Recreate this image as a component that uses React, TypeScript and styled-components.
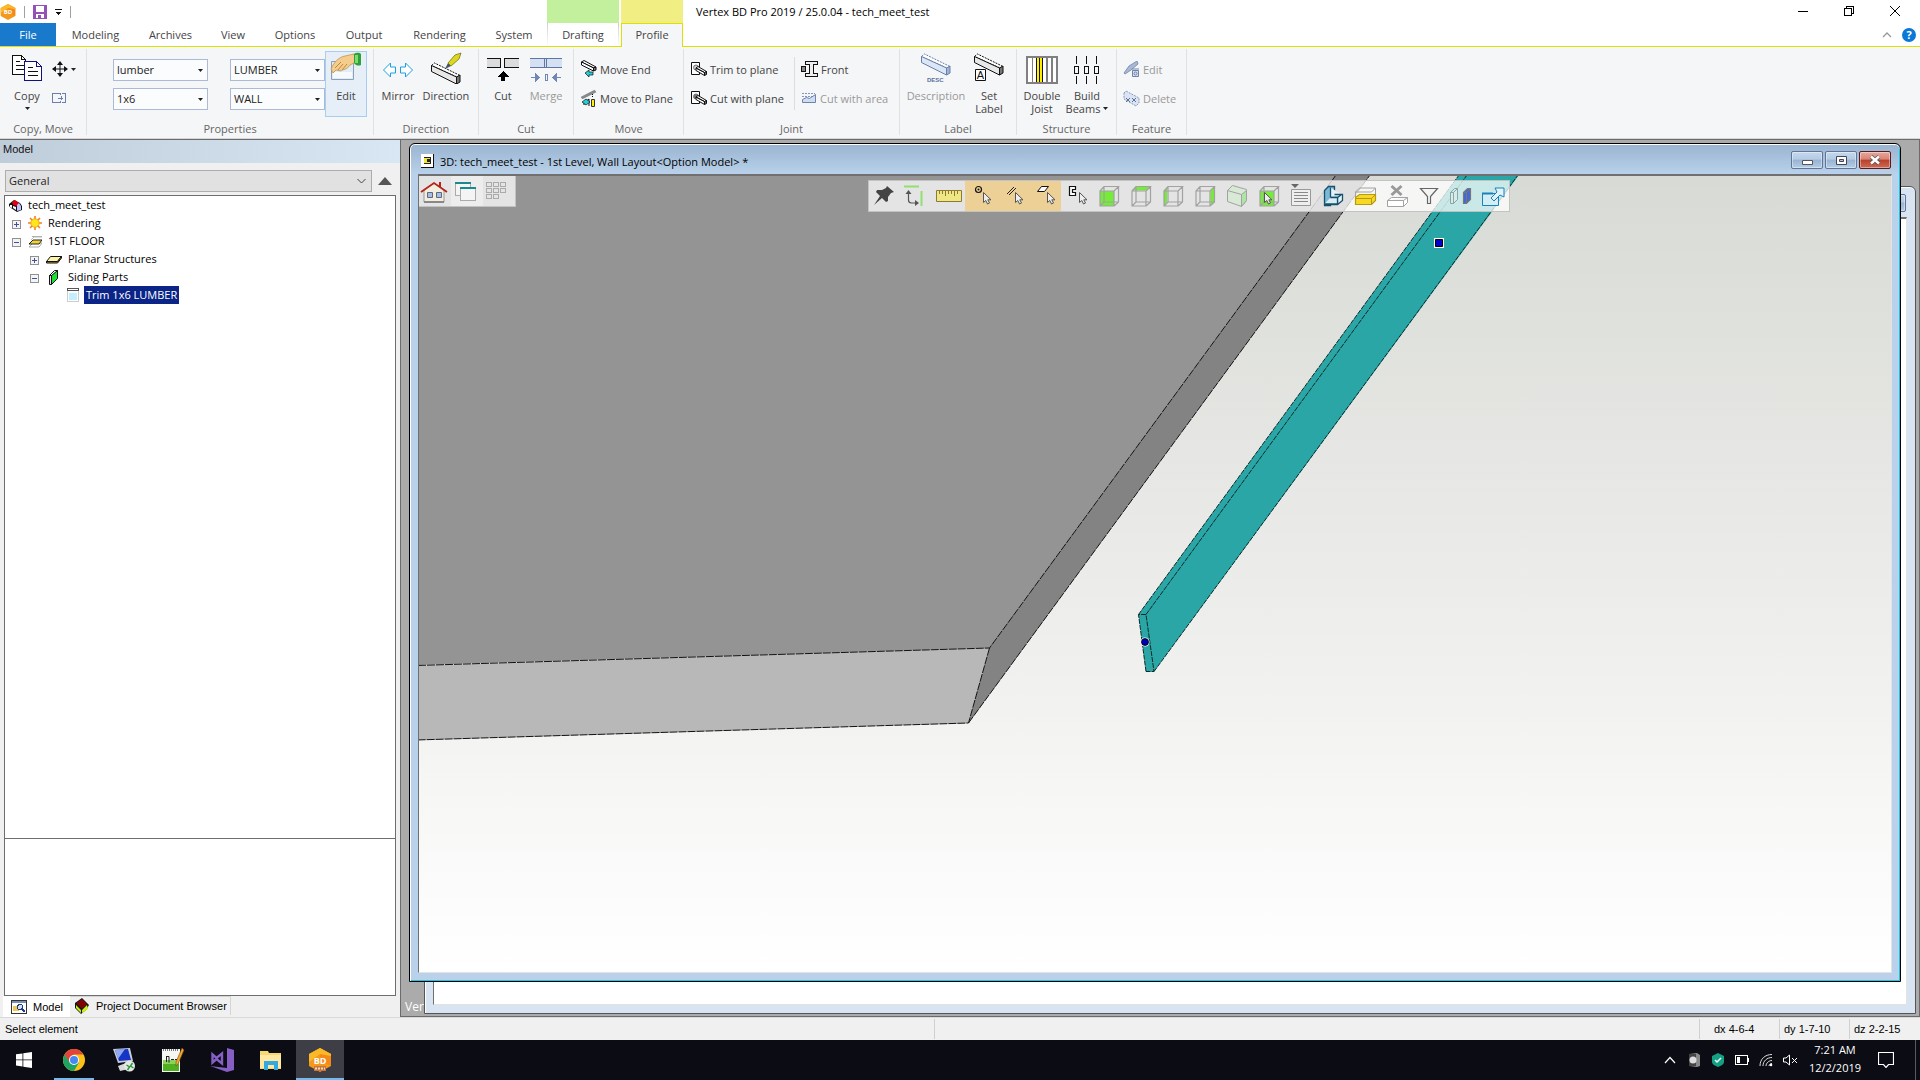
import React from "react";
import styled, { createGlobalStyle, css } from "styled-components";

const ui = `"Segoe UI", "Open Sans", "Noto Sans", sans-serif`;
const classic = `"Liberation Sans", Arial, sans-serif`;

const Global = createGlobalStyle`
  * { box-sizing: border-box; }
  html, body, #root { height: 100%; margin: 0; }
  body { font-family: ${ui}; font-size: 12px; color: #111; overflow: hidden; }
  button, select { font: inherit; color: inherit; margin: 0; padding: 0; border: 0; background: none; border-radius: 0; }
  ul { list-style: none; margin: 0; padding: 0; }
  svg { display: block; flex: none; }
`;

const Page = styled.div`
  height: 100vh;
  display: flex;
  flex-direction: column;
  background: #f0f0f0;
`;

/* ---------- title bar and tabs ---------- */
const TitleBar = styled.header`
  height: 23px;
  flex: none;
  display: flex;
  background: #fff;
`;
const QuickAccess = styled.div`
  width: 547px;
  display: flex;
  align-items: center;
  gap: 8px;
`;
const Bar = styled.i`
  width: 1px;
  height: 12px;
  background: #a0a0a0;
`;
const IconButton = styled.button`
  display: grid;
  place-items: center;
`;
const ContextColor = styled.div<{ $w: number; $c: string }>`
  width: ${(p) => p.$w}px;
  margin-right: 2px;
  background: ${(p) => p.$c};
`;
const AppTitle = styled.h1`
  flex: 1;
  margin: 0 0 0 11px;
  font-size: 11px;
  font-weight: 400;
  line-height: 24px;
  color: #000;
`;
const WindowControls = styled.div`
  display: flex;
  padding-right: 2px;
`;
const ControlButton = styled(IconButton)`
  width: 46px;
  height: 21px;
`;
const TabRow = styled.nav`
  height: 24px;
  flex: none;
  display: flex;
  background: #fff;
  border-bottom: 1px solid #dde000;
`;
const Tab = styled.button<{ $w: number; $kind?: "file" | "context" | "active" }>`
  width: ${(p) => p.$w}px;
  height: 23px;
  padding-bottom: 1px;
  font-size: 11px;
  color: #444;
  ${(p) => p.$kind === "file" && css`background: #1979ca; color: #fff;`}
  ${(p) => p.$kind === "context" && css`
    border: solid; border-width: 0 1px;
    border-image: linear-gradient(#ccc, #fff) 1;
    margin-right: 2px;
  `}
  ${(p) => p.$kind === "active" && css`
    height: 24px; padding-bottom: 3px; background: #f5f6f7;
    border: 1px solid #dde000; border-bottom: 0;
  `}
`;
const TabTools = styled.div`
  margin-left: auto;
  display: flex;
  align-items: center;
  gap: 9px;
  padding-right: 3px;
`;

/* ---------- ribbon ---------- */
const Ribbon = styled.section`
  height: 92px;
  flex: none;
  display: flex;
  padding: 2px 0 0;
  background: #f5f6f7;
  border-bottom: 1px solid #d6d6d6;
`;
const Group = styled.div<{ $w: number }>`
  width: ${(p) => p.$w}px;
  height: 86px;
  display: flex;
  flex-direction: column;
  border-right: 1px solid #e0e1e2;
`;
const GroupBody = styled.div<{ $pad: number }>`
  flex: 1;
  display: flex;
  align-items: flex-start;
  padding-left: ${(p) => p.$pad}px;
`;
const GroupLabel = styled.div`
  height: 14px;
  line-height: 14px;
  margin-bottom: -1px;
  text-align: center;
  font-size: 11px;
  color: #666;
`;
const Big = styled.button<{ $w: number; $on?: boolean }>`
  width: ${(p) => p.$w}px;
  height: 66px;
  margin-top: 2px;
  display: flex;
  flex-direction: column;
  align-items: center;
  gap: 5px;
  border: 1px solid ${(p) => (p.$on ? "#a8cdf0" : "transparent")};
  background: ${(p) => (p.$on ? "#e6eef7" : "none")};
  font-size: 11px;
  line-height: 13px;
  color: #444;
  white-space: nowrap;
  &:disabled { color: #999; }
`;
const Caption = styled.span`
  display: block;
  text-align: center;
`;
const Inline = styled.span`
  display: flex;
  align-items: center;
  gap: 3px;
`;
const Stack = styled.div<{ $gap?: number; $line?: boolean; $w?: number }>`
  margin-top: 8px;
  display: grid;
  gap: 5px;
  width: ${(p) => (p.$w ? p.$w + "px" : "auto")};
  margin-left: ${(p) => p.$gap ?? 0}px;
  ${(p) => p.$line && css`border-right: 1px solid #dcdddf;`}
`;
const Small = styled.button`
  height: 24px;
  display: flex;
  align-items: center;
  gap: 3px;
  font-size: 11px;
  color: #444;
  white-space: nowrap;
  &:disabled { color: #999; }
`;
const Combos = styled.div`
  margin-top: 10px;
  display: grid;
  grid-template-columns: 95px 95px;
  gap: 7px 22px;
`;
const ComboBox = styled.label`
  display: grid;
  grid-template-columns: 1fr 9px;
  align-items: center;
  height: 22px;
  border: 1px solid #abbad6;
  background: #fbfcfd;
`;
const ComboSelect = styled.select`
  grid-area: 1 / 1 / 2 / 3;
  appearance: none;
  height: 20px;
  padding: 0 0 1px 3px;
  font-size: 11px;
  color: #222;
  outline: 0;
`;
const ComboArrow = styled.span`
  grid-area: 1 / 2;
  pointer-events: none;
`;

/* ---------- model panel ---------- */
const Workspace = styled.main`
  flex: 1;
  min-height: 0;
  display: flex;
`;
const Side = styled.aside`
  width: 400px;
  display: flex;
  flex-direction: column;
  border-top: 1px solid #6b6b6b;
  font-size: 11px;
`;
const SideTitle = styled.h2`
  margin: 0;
  height: 23px;
  padding-left: 3px;
  font: 400 11px/19px ${classic};
  background: linear-gradient(90deg, #bfcddb, #d9e6f3);
`;
const FilterRow = styled.div`
  display: flex;
  align-items: center;
  gap: 6px;
  padding: 7px 0 3px 5px;
`;
const Filter = styled.label`
  width: 367px;
  display: grid;
  grid-template-columns: 1fr 14px;
  align-items: center;
  height: 22px;
  border: 1px solid #adadad;
  background: #e1e1e1;
`;
const TreeBox = styled.div`
  flex: 1;
  margin: 0 4px;
  border: 1px solid #6e6e6e;
  background: #fff;
  display: flex;
  flex-direction: column;
`;
const Tree = styled.ul`
  flex: 1;
`;
const Item = styled.li<{ $depth: number }>`
  height: 18px;
  display: flex;
  align-items: center;
  padding-left: ${(p) => p.$depth}px;
`;
const Expand = styled.button<{ $open?: boolean }>`
  width: 9px;
  height: 9px;
  margin: 3px 7px 0 0;
  border: 1px solid #919191;
  background:
    linear-gradient(#4050a0, #4050a0) center / 5px 1px no-repeat,
    ${(p) => (p.$open ? "" : "linear-gradient(#4050a0, #4050a0) center / 1px 5px no-repeat,")}
    #f4f4f4;
`;
const Node = styled.button<{ $sel?: boolean }>`
  height: 18px;
  margin-left: 4px;
  padding: 0 2px 2px;
  color: ${(p) => (p.$sel ? "#fff" : "#000")};
  background-color: ${(p) => (p.$sel ? "#0a2488" : "transparent")};
`;
const Preview = styled.div`
  height: 157px;
  border-top: 1px solid #6e6e6e;
`;
const SideTabs = styled.div`
  display: flex;
  height: 21px;
  padding-left: 3px;
`;
const SideTab = styled.button<{ $on?: boolean }>`
  display: flex;
  align-items: center;
  gap: 6px;
  padding: 0 ${(p) => (p.$on ? 7 : 3)}px 0 ${(p) => (p.$on ? 8 : 4)}px;
  margin-bottom: ${(p) => (p.$on ? 0 : 2)}px;
  font: 11px ${classic};
  color: #000;
  border: 1px solid ${(p) => (p.$on ? "#fff" : "#d5d5d5")};
  border-width: ${(p) => (p.$on ? 0 : "1px 1px 0 0")};
  background: ${(p) => (p.$on ? "#fff" : "#f0f0f0")};
`;

/* ---------- document windows ---------- */
const Mdi = styled.section`
  flex: 1;
  position: relative;
  border: 1px solid #6b6b6b;
  background: #ababab;
  overflow: hidden;
`;
const Minimized = styled.span`
  position: absolute;
  left: 4px;
  bottom: 0;
  font-size: 12px;
  line-height: 18px;
  color: #fff;
`;
const Child = styled.article<{ $back?: boolean }>`
  position: absolute;
  inset: ${(p) => (p.$back ? "46px 3px 2px 23px" : "3px 18px 34px 8px")};
  display: flex;
  flex-direction: column;
  border: 1px solid ${(p) => (p.$back ? "#555" : "#000")};
  border-radius: 6px 6px 0 0;
  padding: 0 8px 8px;
  background: ${(p) => (p.$back ? "#d8e4f2" : "linear-gradient(#99b4d1, #b9d1ea 30px, #b9d1ea)")};
  box-shadow: inset 0 1px #fff, inset 1px 0 #fff${(p) => (p.$back ? "" : ", inset -1px -1px #16c8e4")};
`;
const ChildTitle = styled.header`
  height: 30px;
  display: flex;
  align-items: center;
  gap: 6px;
  padding: 4px 0 0 3px;
`;
const ChildName = styled.h2`
  flex: 1;
  margin: 0;
  font-size: 11px;
  font-weight: 400;
  color: #000;
`;
const ChildButtons = styled.div`
  display: flex;
  gap: 2px;
  margin: 0 1px 2px 0;
`;
const ChildButton = styled(IconButton)<{ $close?: boolean }>`
  width: 32px;
  height: 18px;
  border: 1px solid ${(p) => (p.$close ? "#5a1a1c" : "#5f7496")};
  border-radius: 2px;
  background: ${(p) => p.$close
    ? "linear-gradient(#e8a79c, #d98375 45%, #b8402a 50%, #cc6a55)"
    : "linear-gradient(#c5d8ec, #b4cbe4 45%, #98b3d2 50%, #b4cce6)"};
  box-shadow: inset 0 0 0 1px rgba(255, 255, 255, 0.4);
`;
const Client = styled.div`
  flex: 1;
  min-height: 0;
  position: relative;
  border: solid;
  border-width: 2px 1px 1px 1px;
  border-color: #707070 #e3e3e3 #e3e3e3 #707070;
  background: linear-gradient(#d8dad5, #fff);
  overflow: hidden;
`;
const BlankClient = styled(Client)`
  background: #fff;
`;
const Scene = styled.svg`
  width: 100%;
  height: 100%;
`;
const FloatBar = styled.div<{ $left: number; $top: number }>`
  position: absolute;
  left: ${(p) => p.$left}px;
  top: ${(p) => p.$top}px;
  display: flex;
  border: 1px solid rgba(190, 190, 190, 0.9);
  background: rgba(255, 255, 255, 0.75);
`;
const ToolButton = styled.button<{ $on?: boolean; $light?: boolean }>`
  width: 32px;
  height: 30px;
  background: ${(p) => (p.$on ? "#ecd096" : p.$light ? "rgba(255,255,255,.35)" : "none")};
`;

/* ---------- status bar and taskbar ---------- */
const Status = styled.footer`
  height: 23px;
  flex: none;
  display: flex;
  align-items: center;
  padding: 0 1px 0 5px;
  border-top: 1px solid #d9d9d9;
  background: #f0f0f0;
  font: 11px ${classic};
  color: #000;
`;
const StatusText = styled.span<{ $w?: number }>`
  width: ${(p) => (p.$w ? p.$w + "px" : "auto")};
`;
const Coord = styled.span<{ $w?: number; $pad?: number }>`
  ${(p) => (p.$w ? css`width: ${p.$w}px;` : css`flex: 1;`)}
  height: 20px;
  line-height: 20px;
  padding-left: ${(p) => p.$pad ?? 0}px;
  border-left: 1px solid #d0d0d0;
`;
const Taskbar = styled.footer`
  height: 40px;
  flex: none;
  display: flex;
  gap: 1px;
  background: #0b0c14;
  color: #fff;
`;
const Task = styled(IconButton)<{ $w?: number; $active?: boolean; $running?: boolean }>`
  width: ${(p) => p.$w ?? 48}px;
  height: 40px;
  background-color: ${(p) => (p.$active ? "#3d3e46" : "transparent")};
  ${(p) => (p.$active || p.$running) && css`
    background-image: linear-gradient(#76b9ed, #76b9ed);
    background-size: ${p.$active ? "48px" : "40px"} 2px;
    background-position: center bottom;
    background-repeat: no-repeat;
  `}
`;
const Tray = styled.div`
  margin-left: auto;
  display: flex;
  margin-right: 4px;
  padding-right: 11px;
  border-right: 1px solid #5a5b62;
`;
const TrayButton = styled(IconButton)<{ $w?: number }>`
  width: ${(p) => p.$w ?? 24}px;
`;
const Clock = styled.time`
  width: 66px;
  padding-top: 1px;
  text-align: center;
  font-size: 11px;
  line-height: 18px;
`;

/* ---------- drawings ---------- */
type Art = { w: number; h: number; crisp?: boolean; children: React.ReactNode };
const Svg = ({ w, h, crisp, children }: Art) => (
  <svg width={w} height={h} viewBox={`0 0 ${w} ${h}`} fill="none" aria-hidden="true"
    shapeRendering={crisp ? "crispEdges" : undefined}>{children}</svg>
);
const Down = ({ c = "#222" }: { c?: string }) => (
  <Svg w={5} h={3}><path d="M0 0h5L2.500 3z" fill={c} /></Svg>
);

const BdLogo = ({ s, sub }: { s: number; sub?: boolean }) => (
  <svg width={s} height={s} viewBox="0 0 24 24" aria-hidden="true">
    <path d="M12 0l11 6v12l-11 6L1 18V6z" fill="#f39a1c" />
    <path d="M12 0l11 6v12L12 12z" fill="#f57f17" opacity=".6" />
    <path d="M12 0L1 6v8L12 6l11 2V6z" fill="#fbb829" />
    <text x="12" y="15.500" textAnchor="middle" fontFamily="Open Sans" fontWeight="700" fontSize="9" fill="#fff">BD</text>
    {sub && <path d="M6 18h12v5H6z" fill="#c9743a" />}
    {sub && <path d="M7 20.500h10" stroke="#f6d9b8" strokeWidth="2" strokeDasharray="2 1" />}
  </svg>
);
const Save = () => (
  <Svg w={14} h={14} crisp><path d="M0 0h14v14H0z" fill="#9252b8" /><path d="M3 1h8v6H3zM3 9h8v4H3z" fill="#fff" /><path d="M5 10h3v3H5z" fill="#9252b8" /></Svg>
);
const CopyArt = () => (
  <Svg w={32} h={32} crisp>
    <path d="M1.500 3.500h9l4 4v15h-13z" fill="#fff" stroke="#111" /><path d="M10.500 3.500v4h4M5 9.500h4M5 13.500h8M5 17.500h8" stroke="#111" />
    <path d="M13.500 9.500h12l5 5v14h-17z" fill="#fff" stroke="#101080" /><path d="M25.500 9.500v5h5" stroke="#101080" /><path d="M17 15.500h5M17 19.500h10M17 23.500h10" stroke="#111" />
  </Svg>
);
const MoveArt = () => (
  <Svg w={16} h={16}><path d="M8 1v14M1 8h14" stroke="#111" /><path d="M8 0l3 4H5zM8 16l3-4H5zM0 8l4-3v6zM16 8l-4-3v6z" fill="#111" /></Svg>
);
const StretchArt = () => (
  <Svg w={14} h={10} crisp><path d="M8.500 2V.5h-8v9h8V8M10 .5h3.500v9H10M6 5h5M9.500 3v4" stroke="#6d7fae" /></Svg>
);
const EditArt = () => (
  <Svg w={32} h={32}>
    <path d="M1.500 9.500h22v18h-22z" fill="#e2ecf7" stroke="#8ba0b8" /><path d="M3 20h19v6H3z" fill="#fff" opacity=".7" />
    <path d="M1 17c3-7 8-12 14-13l9-2 2 8-6 3c-3 5-7 4-9 6l-5-1-3 3z" fill="#f4cd8c" stroke="#b98a44" strokeWidth=".7" />
    <path d="M5 16l6-6M8 18l5-6M12 18l5-6" stroke="#b98a44" />
    <path d="M24 2c3-2 6-1 7 0v11c-2 1-5 1-7-2z" fill="#2fa236" /><path d="M25 3h3v8h-3z" fill="#7bdc72" />
  </Svg>
);
const MirrorArt = () => (
  <Svg w={32} h={32}><path d="M1.500 18l7-7v4h5v6h-5v4zM30.500 18l-7-7v4h-5v6h5v4z" fill="#fff" stroke="#1ba1e2" /></Svg>
);
const Beam = ({ c = "#111", f = "#e8e8e8", e = "#777" }: { c?: string; f?: string; e?: string }) => (
  <g stroke={c}><path d="M1.500 4.500L4.500 2 30 14.500l-3 1.500z" fill="#fff" strokeDasharray="2 1" /><path d="M1.500 4.500v6L26.500 23v-7z" fill={f} /><path d="M26.500 16l3.500-2v7l-3.500 2z" fill={e} /></g>
);
const DirectionArt = () => (
  <Svg w={32} h={32}>
    <g transform="translate(0 9)"><Beam /></g>
    <path d="M15 17l3-6 3 3z" fill="#445566" />
    <path d="M18 11l7-8 6-2-2 6-8 7z" fill="#dcd81c" stroke="#6d6710" strokeWidth=".7" />
  </Svg>
);
const CutArt = () => (
  <Svg w={34} h={32} crisp><path d="M1 6h14v10H1M33 6H19v10h14" fill="#dcdcdc" /><path d="M1 6.500h13.500v9H1M33 6.500H18.500v9H33" stroke="#111" /><path d="M17 19l6 6h-4v4h-4v-4h-4z" fill="#000" /></Svg>
);
const MergeArt = () => (
  <Svg w={34} h={32} crisp><path d="M1 6h32v10H1z" fill="#d5e1f3" /><path d="M1 6.500h32M1 15.500h32M15.500 6v10M17.500 6v10" stroke="#5f76a3" /><path d="M2 25h4v-4l5 4.500-5 4.500v-4H2zM32 25h-4v-4l-5 4.500 5 4.500v-4h4z" fill="#7088b4" /><path d="M16 22h2v6h-2z" stroke="#7088b4" /></Svg>
);
const MoveEndArt = () => (
  <Svg w={16} h={18}>
    <g stroke="#111"><path d="M.5 2L3 .5 15 7l-2 1z" fill="#fff" /><path d="M.5 2v3L12.500 11V8z" fill="#fff" /><path d="M12.500 8L15 7v3l-2.500 1z" fill="#777" /></g>
    <path d="M4 13l4-3v2h4v3H8v2z" fill="#1fd0d8" stroke="#111" strokeWidth=".7" />
  </Svg>
);
const MovePlaneArt = () => (
  <Svg w={16} h={18}><path d="M0 8.500L14 1.500M1 9.500L15 2.500" stroke="#888" strokeWidth="1.500" /><path d="M2 15h2v-2l4-3v7" stroke="#111" /><path d="M1 13l4-3 4 3-4 3z" fill="#1fd0d8" stroke="#111" strokeWidth=".7" /><path d="M11.500 5v3" stroke="#111" strokeDasharray="1 1" /><path d="M10.500 10.500h3v7h-3z" fill="#ffee10" stroke="#333" /></Svg>
);
const TrimArt = ({ solid }: { solid?: boolean }) => (
  <Svg w={17} h={16}><path d="M1.500 1.500h8v12h-8z" fill="#fff" stroke="#111" /><circle cx="6" cy="6.500" r="2.500" fill={solid ? "#777" : "#ccc"} stroke="#777" /><path d="M6 7l2-1.500 8.500 5-2 1zM6 7v2.500l8.500 5v-3z" fill="#fff" stroke="#111" /><path d="M14.500 11.500l2-1v3l-2 1z" fill="#777" stroke="#111" /></Svg>
);
const FrontArt = () => (
  <Svg w={17} h={16} crisp><path d="M4.500 .5h12v3h-4v9h4v3h-12v-3h4v-9h-4z" fill="#eee" stroke="#111" /><path d="M.5 5.500h4v5h-4z" fill="#888" stroke="#111" /></Svg>
);
const AreaArt = () => (
  <Svg w={16} h={12}><path d="M1 4.500h14M1 1.500h13" stroke="#8095bf" strokeDasharray="2 1" /><path d="M1.500 10.500v-3l4-2 3 1 6-4v8z" fill="#cfdcf2" stroke="#7083a8" /></Svg>
);
const DescArt = () => (
  <Svg w={32} h={32}><Beam c="#6a80ab" f="#dbe6f6" e="#9fb2d4" /><text x="7" y="30" fontFamily="Liberation Sans" fontWeight="700" fontSize="6" fill="#5a709c">DESC</text></Svg>
);
const SetLabelArt = () => (
  <Svg w={32} h={32}><Beam /><path d="M2.500 17.500h10v11h-10z" fill="#fff" stroke="#111" /><text x="7.500" y="27" textAnchor="middle" fontFamily="Liberation Sans" fontSize="11" fill="#111">A</text></Svg>
);
const JoistArt = () => (
  <Svg w={32} h={32} crisp><path d="M0 4h32v28H0z" fill="#808080" /><path d="M2 6h4v24H2zM7 6h3v24H7zM17 6h3v24h-3zM22 6h3v24h-3zM27 6h3v24h-3z" fill="#fff" /><path d="M11 6h5v24h-5z" fill="#ffee00" /><path d="M10.500 6v24M13.500 6v24M16.500 6v24" stroke="#111" /></Svg>
);
const BeamsArt = () => (
  <Svg w={26} h={32} crisp>{[2.5, 12.5, 22.5].map((x) => <path key={x} d={`M${x} 4v8M${x} 24v8M${x - 2} 14.500h4v7h-4z`} stroke="#111" />)}</Svg>
);
const FeatureEditArt = () => (
  <Svg w={17} h={17}><path d="M1 12L6 5l8-5 1 3-7 6-6 4z" fill="#a9b8d4" stroke="#7083a8" strokeWidth=".8" /><path d="M9 8h7M9.500 9.500h6v6h-6z" fill="#d6e0f2" stroke="#7083a8" /><circle cx="12.500" cy="12.500" r="1.500" stroke="#7083a8" /></Svg>
);
const FeatureDeleteArt = () => (
  <Svg w={17} h={17}><path d="M1 3l2-2 13 7v5l-3 3L1 9z" fill="#dbe4f3" stroke="#7083a8" strokeWidth=".8" strokeDasharray="2 1" /><path d="M3 8l4 4M7 8l-4 4M9 8l4 4M13 8l-4 4" stroke="#5d7098" /></Svg>
);

/* tree drawings */
const HouseCube = () => (
  <Svg w={14} h={13}><path d="M1 5l5-4 6 3 2 3v4l-5 2-6-4-2-2z" fill="#111" /><path d="M4 3l3-2 4 3-2 3-4-1z" fill="#e00010" /><path d="M9 6l2-2 2 3v4l-4 1z" fill="#c3c3ff" /><path d="M2 6h2v3l-2-1zM5 7l3 1v3l-3-2z" fill="#fff" /></Svg>
);
const Sun = () => (
  <Svg w={14} h={14}><path d="M7 0v14M0 7h14M2 2l10 10M12 2L2 12" stroke="#f08020" strokeWidth="1.600" /><circle cx="7" cy="7" r="4.200" fill="#ffe81a" stroke="#f5a31a" /></Svg>
);
const Floor = () => (
  <Svg w={14} h={13}><path d="M4 1.500h10M1 12l4-4h9l-3 4z" stroke="#aaa" /><path d="M1 9l4-4h9l-3 4z" fill="#f2d23c" stroke="#111" strokeWidth=".9" /><path d="M3 5l3-3h8" stroke="#bbb" /></Svg>
);
const Planar = () => (
  <Svg w={16} h={9}><path d="M.5 6.500l4-5h11l-4 5z" fill="#fff5a8" stroke="#111" /><path d="M.5 6.500v1.500h11l4-5V1.500l-4 5z" fill="#b8a030" stroke="#111" /></Svg>
);
const Siding = () => (
  <Svg w={16} h={16}><path d="M3.500 6.500l5-5h3l-5 5z" fill="#fff" stroke="#111" /><path d="M3.500 6.500h2v9h-2z" fill="#ddd" stroke="#111" /><path d="M5.500 6.500l6-5v8l-6 6z" fill="#18e030" stroke="#111" /></Svg>
);
const Doc = () => (
  <Svg w={14} h={14} crisp><path d="M1.500 .5h11v13h-11z" fill="#fff" stroke="#ccc" /><path d="M1 0h12v3H1z" fill="#555" /><path d="M2 1h10v1H2z" fill="#fff" /><path d="M3 5h8v7H3z" fill="#c4effc" /></Svg>
);

/* view toolbar drawings, each on a 32 x 30 cell */
const g = "#a2a2a2";
const green = "#74ec38";
const Pointer = ({ x = 18, y = 11, c = "#555" }: { x?: number; y?: number; c?: string }) => (
  <path transform={`translate(${x} ${y})`} d="M.5 .5v10l2.300-2 1.700 3.500 2-1-1.700-3.200h3.200z" fill="#eee" stroke={c} />
);
const Cube = ({ face }: { face?: "front" | "top" | "left" | "right" }) => (
  <>
    {face === "front" && <path d="M7 10h14v15H7z" fill={green} />}
    {face === "top" && <path d="M7 9.500l4-4h14l-4 4z" fill={green} />}
    {face === "left" && <path d="M7 10l3-3v14l-3 4z" fill={green} />}
    {face === "right" && <path d="M21.500 10l4-4v15l-4 4z" fill={green} />}
    <path d="M7 10h14v15H7zM7 10l4-4.500h14.500L21 10M25.500 5.500V21L21 25M11 5.500V21h14.500M11 21l-4 4" stroke={g} strokeWidth="1.200" />
  </>
);
const tools: { name: string; on?: boolean; art: React.ReactNode }[] = [
  { name: "Pin", art: <path d="M18 5l7 6-3 1-3 4 0 4-2 1-4-4-8 7 6-9-4-4 1-2 5 0 4-2z" fill="#444" /> },
  { name: "Axes", art: <><path d="M3 5.500h15M20.500 10v15" stroke="#8fe070" strokeWidth="2" /><path d="M7.500 11v8c0 2 1 3 3 3h6" stroke="#555" strokeWidth="1.200" /><path d="M7.500 9l3 4h-6zM18 22l-4-3v6z" fill="#555" /></> },
  { name: "Measure", art: <><path d="M3.500 9.500h25v11h-25z" fill="#efe785" stroke="#8e7a30" /><path d="M6.500 10v3M9.500 10v3M12.500 10v5M15.500 10v3M18.500 10v3M21.500 10v5M24.500 10v3" stroke="#8e7a30" /></> },
  { name: "Snap to point", on: true, art: <><circle cx="13.500" cy="8.500" r="3" stroke="#111" strokeWidth="1.200" /><circle cx="13.500" cy="8.500" r="1" fill="#111" /><Pointer /></> },
  { name: "Snap to line", on: true, art: <><path d="M10 13l7-7M12 14l7-7" stroke="#222" /><Pointer /></> },
  { name: "Snap to face", on: true, art: <><path d="M8.500 10.500l4-5h7l-4 5z" fill="#fff" stroke="#111" /><Pointer /></> },
  { name: "Select part", art: <><path d="M8.500 5.500h6v3h-3v3h3v3h-6z" fill="#fff" stroke="#111" strokeWidth="1.200" /><Pointer /></> },
  { name: "Front view", art: <Cube face="front" /> },
  { name: "Top view", art: <Cube face="top" /> },
  { name: "Left view", art: <Cube face="left" /> },
  { name: "Right view", art: <Cube face="right" /> },
  { name: "Isometric view", art: <><path d="M6.500 9.500l5-5 14 4v11l-5 6-14-5z" fill="#d8ead6" stroke={g} /><path d="M20.500 13.500l5-4v10l-5 6z" fill="#ace5a4" stroke={g} /><path d="M6.500 9.500l14 4" stroke={g} /></> },
  { name: "View from face", art: <><Cube face="front" /><Pointer x={11} y={11} /></> },
  { name: "Layers", art: <><path d="M6 3h8l-4 4z" fill="#666" /><path d="M6.500 8.500h19v16h-19z" fill="#eee" stroke="#999" /><path d="M9 11.500h14M9 14.500h14M9 17.500h14M9 20.500h14" stroke="#888" /></> },
  { name: "Solid model", art: <><path d="M7.500 9.500l4-4h6v8l-4 5v6h-6z" fill="#7db9d6" stroke="#16506c" strokeWidth="1.300" /><path d="M13.500 6.500v10h7l4-3M7.500 23.500h13l5-4v-6h-8M20.500 17v6" stroke="#16506c" strokeWidth="1.300" fill="#e3f2f8" /><path d="M13.500 16.500h7v6.500h-13" stroke="#16506c" strokeWidth="1.300" fill="#d7ecf5" /></> },
  { name: "Section", art: <><path d="M6.500 16.500l4-3h16v6l-4 4h-16z" fill="#f7d925" stroke="#b69a10" strokeWidth="1.200" /><path d="M6.500 17.500h16l4-4M22.500 17.500v6" stroke="#b69a10" /><path d="M6.500 16V11l4-4h16v6M6.500 11h16l4-4" stroke={g} /></> },
  { name: "Remove section", art: <><path d="M10.500 5l10 9M20.500 5l-10 9" stroke="#999" strokeWidth="3" /><path d="M6.500 19.500l4-3h16v5l-4 4h-16zM6.500 19.500h16l4-3M22.500 19.500v6" stroke={g} fill="#fff" /></> },
  { name: "Filter", art: <path d="M7.500 7.500h17l-7 8v7h-3v-7z" fill="#f4f4f4" stroke="#666" strokeWidth="1.200" /> },
  { name: "Compare", art: <><path d="M5.500 11.500l4-4h3v11l-4 4h-3zM8.500 11.500v11M5.500 11.500h3l4-4" stroke="#8aa5a5" fill="#d8ebeb" /><path d="M18.500 11.500l4-4h3v11l-4 4h-3z" fill="#4267d6" stroke="#777" strokeWidth="1.200" /><path d="M18.500 11.500h3l4-4M21.500 11.500v11" stroke="#777" /></> },
  { name: "Detach view", art: <><path d="M5.500 12.500h16v12h-16z" stroke="#1782bf" fill="#d3edf2" /><path d="M5 12.500h11" stroke="#1782bf" strokeWidth="2" /><path d="M14 17l6-6-2-4h9v9l-4-2-6 6z" fill="#e2f4f8" stroke="#1782bf" /></> },
];

const tabs = [["Modeling", 79], ["Archives", 71], ["View", 54], ["Options", 70], ["Output", 68], ["Rendering", 83], ["System", 66]] as const;

const Combo = ({ label, value }: { label: string; value: string }) => (
  <ComboBox>
    <ComboSelect aria-label={label} defaultValue={value}><option>{value}</option></ComboSelect>
    <ComboArrow><Down /></ComboArrow>
  </ComboBox>
);

export default function App() {
  return (
    <Page>
      <Global />
      <TitleBar>
        <QuickAccess>
          <BdLogo s={16} /><Bar />
          <IconButton aria-label="Save"><Save /></IconButton>
          <IconButton aria-label="Customize toolbar"><Svg w={7} h={6} crisp><path d="M0 .5h7" stroke="#111" /><path d="M0 3h7L3.500 6z" fill="#111" /></Svg></IconButton>
          <Bar />
        </QuickAccess>
        <ContextColor $w={72} $c="#c2f09c" />
        <ContextColor $w={62} $c="#f1ee83" />
        <AppTitle>Vertex BD Pro 2019 / 25.0.04 - tech_meet_test</AppTitle>
        <WindowControls>
          <ControlButton aria-label="Minimize"><Svg w={10} h={10} crisp><path d="M0 5.500h10" stroke="#000" /></Svg></ControlButton>
          <ControlButton aria-label="Restore"><Svg w={10} h={10} crisp><path d="M.5 2.500h7v7h-7zM2.500 2.500v-2h7v7h-2" stroke="#000" /></Svg></ControlButton>
          <ControlButton aria-label="Close"><Svg w={10} h={10}><path d="M0 0l10 10M10 0L0 10" stroke="#000" /></Svg></ControlButton>
        </WindowControls>
      </TitleBar>
      <TabRow>
        <Tab $w={56} $kind="file">File</Tab>
        {tabs.map(([t, w]) => <Tab key={t} $w={w}>{t}</Tab>)}
        <Tab $w={72} $kind="context">Drafting</Tab>
        <Tab $w={62} $kind="active">Profile</Tab>
        <TabTools>
          <IconButton aria-label="Collapse ribbon"><Svg w={10} h={6}><path d="M1 5l4-4 4 4" stroke="#999" strokeWidth="1.300" /></Svg></IconButton>
          <IconButton aria-label="Help"><Svg w={16} h={16}><circle cx="8" cy="8" r="7" fill="#0a78d7" /><text x="8" y="12" textAnchor="middle" fontFamily="Open Sans" fontWeight="700" fontSize="11" fill="#fff">?</text></Svg></IconButton>
        </TabTools>
      </TabRow>

      <Ribbon>
        <Group $w={87}>
          <GroupBody $pad={6}>
            <Big $w={42}><CopyArt /><Caption>Copy</Caption><Down /></Big>
            <Stack $gap={4}>
              <Small aria-label="Move"><MoveArt /><Down /></Small>
              <Small aria-label="Stretch"><StretchArt /></Small>
            </Stack>
          </GroupBody>
          <GroupLabel>Copy, Move</GroupLabel>
        </Group>
        <Group $w={287}>
          <GroupBody $pad={26}>
            <Combos>
              <Combo label="Material" value="lumber" />
              <Combo label="Group" value="LUMBER" />
              <Combo label="Size" value="1x6" />
              <Combo label="Usage" value="WALL" />
            </Combos>
            <Big $w={42} $on><EditArt /><Caption>Edit</Caption></Big>
          </GroupBody>
          <GroupLabel>Properties</GroupLabel>
        </Group>
        <Group $w={105}>
          <GroupBody $pad={4}>
            <Big $w={40}><MirrorArt /><Caption>Mirror</Caption></Big>
            <Big $w={56}><DirectionArt /><Caption>Direction</Caption></Big>
          </GroupBody>
          <GroupLabel>Direction</GroupLabel>
        </Group>
        <Group $w={95}>
          <GroupBody $pad={4}>
            <Big $w={40}><CutArt /><Caption>Cut</Caption></Big>
            <Big $w={46} disabled><MergeArt /><Caption>Merge</Caption></Big>
          </GroupBody>
          <GroupLabel>Cut</GroupLabel>
        </Group>
        <Group $w={110}>
          <GroupBody $pad={7}>
            <Stack>
              <Small><MoveEndArt />Move End</Small>
              <Small><MovePlaneArt />Move to Plane</Small>
            </Stack>
          </GroupBody>
          <GroupLabel>Move</GroupLabel>
        </Group>
        <Group $w={216}>
          <GroupBody $pad={6}>
            <Stack $line $w={105}>
              <Small><TrimArt />Trim to plane</Small>
              <Small><TrimArt solid />Cut with plane</Small>
            </Stack>
            <Stack $gap={6}>
              <Small><FrontArt />Front</Small>
              <Small disabled><AreaArt />Cut with area</Small>
            </Stack>
          </GroupBody>
          <GroupLabel>Joint</GroupLabel>
        </Group>
        <Group $w={117}>
          <GroupBody $pad={4}>
            <Big $w={64} disabled><DescArt /><Caption>Description</Caption></Big>
            <Big $w={42}><SetLabelArt /><Caption>Set<br />Label</Caption></Big>
          </GroupBody>
          <GroupLabel>Label</GroupLabel>
        </Group>
        <Group $w={100}>
          <GroupBody $pad={4}>
            <Big $w={42}><JoistArt /><Caption>Double<br />Joist</Caption></Big>
            <Big $w={48}><BeamsArt /><Caption>Build<Inline>Beams <Down /></Inline></Caption></Big>
          </GroupBody>
          <GroupLabel>Structure</GroupLabel>
        </Group>
        <Group $w={70}>
          <GroupBody $pad={6}>
            <Stack>
              <Small disabled><FeatureEditArt />Edit</Small>
              <Small disabled><FeatureDeleteArt />Delete</Small>
            </Stack>
          </GroupBody>
          <GroupLabel>Feature</GroupLabel>
        </Group>
      </Ribbon>

      <Workspace>
        <Side>
          <SideTitle>Model</SideTitle>
          <FilterRow>
            <Filter>
              <ComboSelect aria-label="View" defaultValue="General"><option>General</option></ComboSelect>
              <ComboArrow><Svg w={9} h={6}><path d="M.5 1l4 4 4-4" stroke="#444" /></Svg></ComboArrow>
            </Filter>
            <IconButton aria-label="Up"><Svg w={14} h={8}><path d="M7 0l7 8H0z" fill="#555" /></Svg></IconButton>
          </FilterRow>
          <TreeBox>
            <Tree>
              <Item $depth={3}><HouseCube /><Node>tech_meet_test</Node></Item>
              <Item $depth={7}><Expand aria-label="Expand Rendering" /><Sun /><Node>Rendering</Node></Item>
              <Item $depth={7}><Expand $open aria-label="Collapse 1ST FLOOR" /><Floor /><Node>1ST FLOOR</Node></Item>
              <Item $depth={25}><Expand aria-label="Expand Planar Structures" /><Planar /><Node>Planar Structures</Node></Item>
              <Item $depth={25}><Expand $open aria-label="Collapse Siding Parts" /><Siding /><Node>Siding Parts</Node></Item>
              <Item $depth={61}><Doc /><Node $sel>Trim 1x6 LUMBER</Node></Item>
            </Tree>
            <Preview />
          </TreeBox>
          <SideTabs>
            <SideTab $on><Svg w={16} h={14} crisp><path d="M.5 .5h15v13H.5z" fill="#fff" stroke="#333" /><path d="M1 1h14v2H1z" fill="#7a8fb5" /><path d="M2 6h6v5H2z" fill="#f0c850" /><circle cx="9" cy="7" r="2.500" fill="#cfe4ff" stroke="#223a80" /><path d="M10.500 8.500L14 12" stroke="#223a80" strokeWidth="2" /></Svg>Model</SideTab>
            <SideTab><Svg w={16} h={16}><path d="M1 5l7-5 7 7-3 5-5 4-6-6z" fill="#111" /><path d="M2 5l6-4 5 5-5 5z" fill="#7c0404" /><path d="M8 12l5-5 1 4-6 4zM2 7l5 5v3l-5-5z" fill="#c6f018" /></Svg>Project Document Browser</SideTab>
          </SideTabs>
        </Side>

        <Mdi>
          <Minimized>Vertex</Minimized>
          <Child $back>
            <ChildTitle><ChildName /><ChildButtons><ChildButton aria-label="Close background window" /></ChildButtons></ChildTitle>
            <BlankClient />
          </Child>
          <Child>
            <ChildTitle>
              <Svg w={13} h={14} crisp><path d="M0 0h12v13H0z" fill="#fff" /><path d="M12.500 0v13.500H0" stroke="#111" /><path d="M3 3h7v7H3z" fill="#222" /><path d="M3 4h6v2H6v2h3v1H3z" fill="#f2e530" /><path d="M6 5h3v3H6z" fill="#222" /></Svg>
              <ChildName>3D: tech_meet_test - 1st Level, Wall Layout&lt;Option Model&gt; *</ChildName>
              <ChildButtons>
                <ChildButton aria-label="Minimize view"><Svg w={11} h={9}><path d="M.5 4.500h10v4H.5z" fill="#fff" stroke="#555" /></Svg></ChildButton>
                <ChildButton aria-label="Maximize view"><Svg w={11} h={9}><path d="M.5 .5h10v8H.5z" fill="#fff" stroke="#444455" /><path d="M3.500 3.500h4v2h-4z" fill="#a8c0dc" stroke="#444455" /></Svg></ChildButton>
                <ChildButton $close aria-label="Close view"><Svg w={12} h={10}><path d="M2 1.500l8 7M10 1.500l-8 7" stroke="#555" strokeWidth="4" /><path d="M2 1.500l8 7M10 1.500l-8 7" stroke="#fff" strokeWidth="2.500" /></Svg></ChildButton>
              </ChildButtons>
            </ChildTitle>
            <Client>
              <Scene aria-label="3D model view">
                <g transform="translate(-419 -176)" strokeLinejoin="round">
                  <path d="M400 160V665.500L989.500 648 1347 160z" fill="#949494" />
                  <path d="M989.500 648L1347 160h34L968.500 723z" fill="#838383" />
                  <path d="M400 666l589.500-18-21 75L400 740.500z" fill="#b8b8b8" />
                  <path d="M400 666l589.500-18L1347 160M989.500 648l-21 75L400 740.500M968.500 723L1381 160" fill="none" stroke="#111" strokeDasharray="8 1" />
                  <path d="M1138.500 614.500L1470 160h60L1154 671.500h-8z" fill="#2aa6a6" />
                  <path d="M1146 671.500l-7.500-57H1146l8 57h-8M1138.500 614.500L1470 160M1146 614.500L1478 160M1154 671.500L1529 160" fill="none" stroke="#0a2a2a" strokeDasharray="5 1" />
                  <path d="M1434 238h10v10h-10z" fill="#fff" /><path d="M1435.500 239.500h7v7h-7z" stroke="#000" fill="#0000c8" />
                  <circle cx="1145" cy="642" r="4.500" fill="#fff" /><circle cx="1145" cy="642" r="3.500" fill="#0000b8" stroke="#000" strokeWidth=".8" />
                </g>
              </Scene>
              <FloatBar $left={-1} $top={-1}>
                <ToolButton aria-label="Home view"><Svg w={32} h={30}><path d="M5 14v12h20V14l-10-7z" fill="#f3eee0" stroke="#999" /><path d="M5 26h20" stroke="#888" strokeWidth="2" /><path d="M2 16L15 7l13 9" stroke="#b5231c" strokeWidth="1.800" /><path d="M20 6h2v5h-2z" fill="#b5231c" /><path d="M8.500 16.500h5v5h-5zM17.500 16.500h5v5h-5z" fill="#9cc4ea" stroke="#666677" /></Svg></ToolButton>
                <ToolButton $light aria-label="Windows"><Svg w={32} h={30} crisp><path d="M4.500 6.500h15v13h-15z" fill="#f4f4f4" stroke="#aaa" /><path d="M4 6.500h16" stroke="#1a8a8a" strokeWidth="2" /><path d="M9.500 12.500h15v12h-15z" fill="#f4f4f4" stroke="#aaa" /><path d="M9 12h16" stroke="#1a8a8a" strokeWidth="2" /></Svg></ToolButton>
                <ToolButton aria-label="Grid"><Svg w={32} h={30} crisp>{[3, 10, 17].flatMap((x) => [6, 12, 18].map((y) => (x === 17 && y === 18 ? null : <path key={`${x}-${y}`} d={`M${x + 0.5} ${y + 0.5}h5v4h-5z`} stroke="#aaa" />)))}</Svg></ToolButton>
              </FloatBar>
              <FloatBar $left={449} $top={4}>
                {tools.map((t) => (
                  <ToolButton key={t.name} $on={t.on} aria-label={t.name}><Svg w={32} h={30}>{t.art}</Svg></ToolButton>
                ))}
              </FloatBar>
            </Client>
          </Child>
        </Mdi>
      </Workspace>

      <Status>
        <StatusText $w={929}>Select element</StatusText>
        <Coord />
        <Coord $w={80} $pad={14}>dx 4-6-4</Coord>
        <Coord $w={70} $pad={4}>dy 1-7-10</Coord>
        <Coord $w={70} $pad={4}>dz 2-2-15</Coord>
      </Status>

      <Taskbar>
        <Task $w={48} aria-label="Start"><Svg w={16} h={16}><path d="M0 2.300L6.500 1.400v6.100H0zM7.300 1.300L16 0v7.500H7.300zM0 8.300h6.500v6.200L0 13.600zM7.300 8.300H16V16l-8.700-1.300z" fill="#fff" /></Svg></Task>
        <Task $w={50} $running aria-label="Chrome"><Svg w={22} h={22}><circle cx="11" cy="11" r="11" fill="#fbc116" /><path d="M1.500 5.500A11 11 0 0 1 20.500 5.500H11L6 14z" fill="#e0443a" /><path d="M1.500 5.500A11 11 0 0 0 11 22l5-8.500H6.500z" fill="#1da462" /><circle cx="11" cy="11" r="5" fill="#fff" /><circle cx="11" cy="11" r="4" fill="#4688f1" /></Svg></Task>
        <Task aria-label="Remote desktop"><Svg w={24} h={24}><path d="M1 1l17-1 3 13-15 2z" fill="#c8ccd4" /><path d="M3 2l13-1 3 11-12 1z" fill="#1535c8" /><path d="M3 2l10-1-7 10z" fill="#8fa8f0" /><path d="M6 18l8-3 3 6-9 2z" fill="#d8d8d8" /><circle cx="17.500" cy="18" r="5.500" fill="#e6e6e6" /><path d="M14.500 17l3 2-2 3M20.500 15l-2 3 3 2" stroke="#2d9a3a" strokeWidth="1.500" /></Svg></Task>
        <Task aria-label="Notepad"><Svg w={24} h={26}><path d="M1 2h18v23H1z" fill="#f5f7f2" /><path d="M2 13h16v11H2z" fill="#8bd35a" /><path d="M2 17h16v7H2z" fill="#4fb020" /><path d="M2 3h16" stroke="#777" strokeWidth="2" strokeDasharray="1 1" /><path d="M5.500 9v6M5 9.500h3v6M10 12.500h3M14 12.500h2" stroke="#222" /><path d="M21 1l2 2-6 14-2 2v-4z" fill="#f0a830" stroke="#7a4a10" strokeWidth=".6" /></Svg></Task>
        <Task aria-label="Visual Studio"><Svg w={24} h={24}><path d="M17 0l7 2v20l-7 2L0 18l17 2z" fill="#865fc5" /><path d="M2.500 6.500v8l4-3.500L12 15.500V5.500L6.500 10z" stroke="#865fc5" strokeWidth="2.400" /></Svg></Task>
        <Task aria-label="File Explorer"><Svg w={22} h={20}><path d="M0 1h8l1 2h12v16H0z" fill="#f8d775" /><path d="M0 5h21v13H0z" fill="#ffe9a2" /><path d="M4 11h14v9h-4v-5H8v5H4z" fill="#35a8e0" /></Svg></Task>
        <Task $active aria-label="Vertex BD"><BdLogo s={24} sub /></Task>
        <Tray>
          <TrayButton aria-label="Show hidden icons"><Svg w={12} h={8}><path d="M1 7l5-5.500L11 7" stroke="#fff" strokeWidth="1.200" /></Svg></TrayButton>
          <TrayButton aria-label="Device"><Svg w={13} h={14}><path d="M1 1l8-1 3 2v11l-3 1-8-1z" fill="#8a8a8a" /><path d="M1 1h7v12H1z" fill="#444" /><circle cx="5" cy="7" r="3.500" fill="#ddd" /></Svg></TrayButton>
          <TrayButton aria-label="Security"><Svg w={12} h={14}><path d="M6 0l6 3v6c0 2-3 4-6 5-3-1-6-3-6-5V3z" fill="#12a184" /><path d="M3 7l2 2 4-4" stroke="#fff" strokeWidth="1.500" /></Svg></TrayButton>
          <TrayButton aria-label="Battery"><Svg w={15} h={10} crisp><path d="M.5 .5h12v9H.5zM13.500 3v4" stroke="#fff" /><path d="M2 2h3v6H2z" fill="#fff" /></Svg></TrayButton>
          <TrayButton aria-label="Network"><Svg w={14} h={14}><path d="M1 13C1 6 6 1.500 13 1.500M4 13c0-5 4-8.500 9-8.500M7 13c0-3 3-5.500 6-5.500M10 13c0-1.500 1.500-2.500 3-2.500" stroke="#ddd" /><circle cx="12" cy="12" r="1.300" fill="#fff" /></Svg></TrayButton>
          <TrayButton aria-label="Volume muted"><Svg w={15} h={12}><path d="M.5 4v4h2.500l3.500 3V1L3 4zM9 4l5 5M14 4L9 9" stroke="#fff" /></Svg></TrayButton>
          <Clock>7:21 AM<br />12/2/2019</Clock>
          <TrayButton $w={36} aria-label="Notifications"><Svg w={16} h={16}><path d="M.5 .5h15v12h-5L8 15.500l-2.500-3h-5z" stroke="#fff" strokeWidth="1.200" /></Svg></TrayButton>
        </Tray>
      </Taskbar>
    </Page>
  );
}
